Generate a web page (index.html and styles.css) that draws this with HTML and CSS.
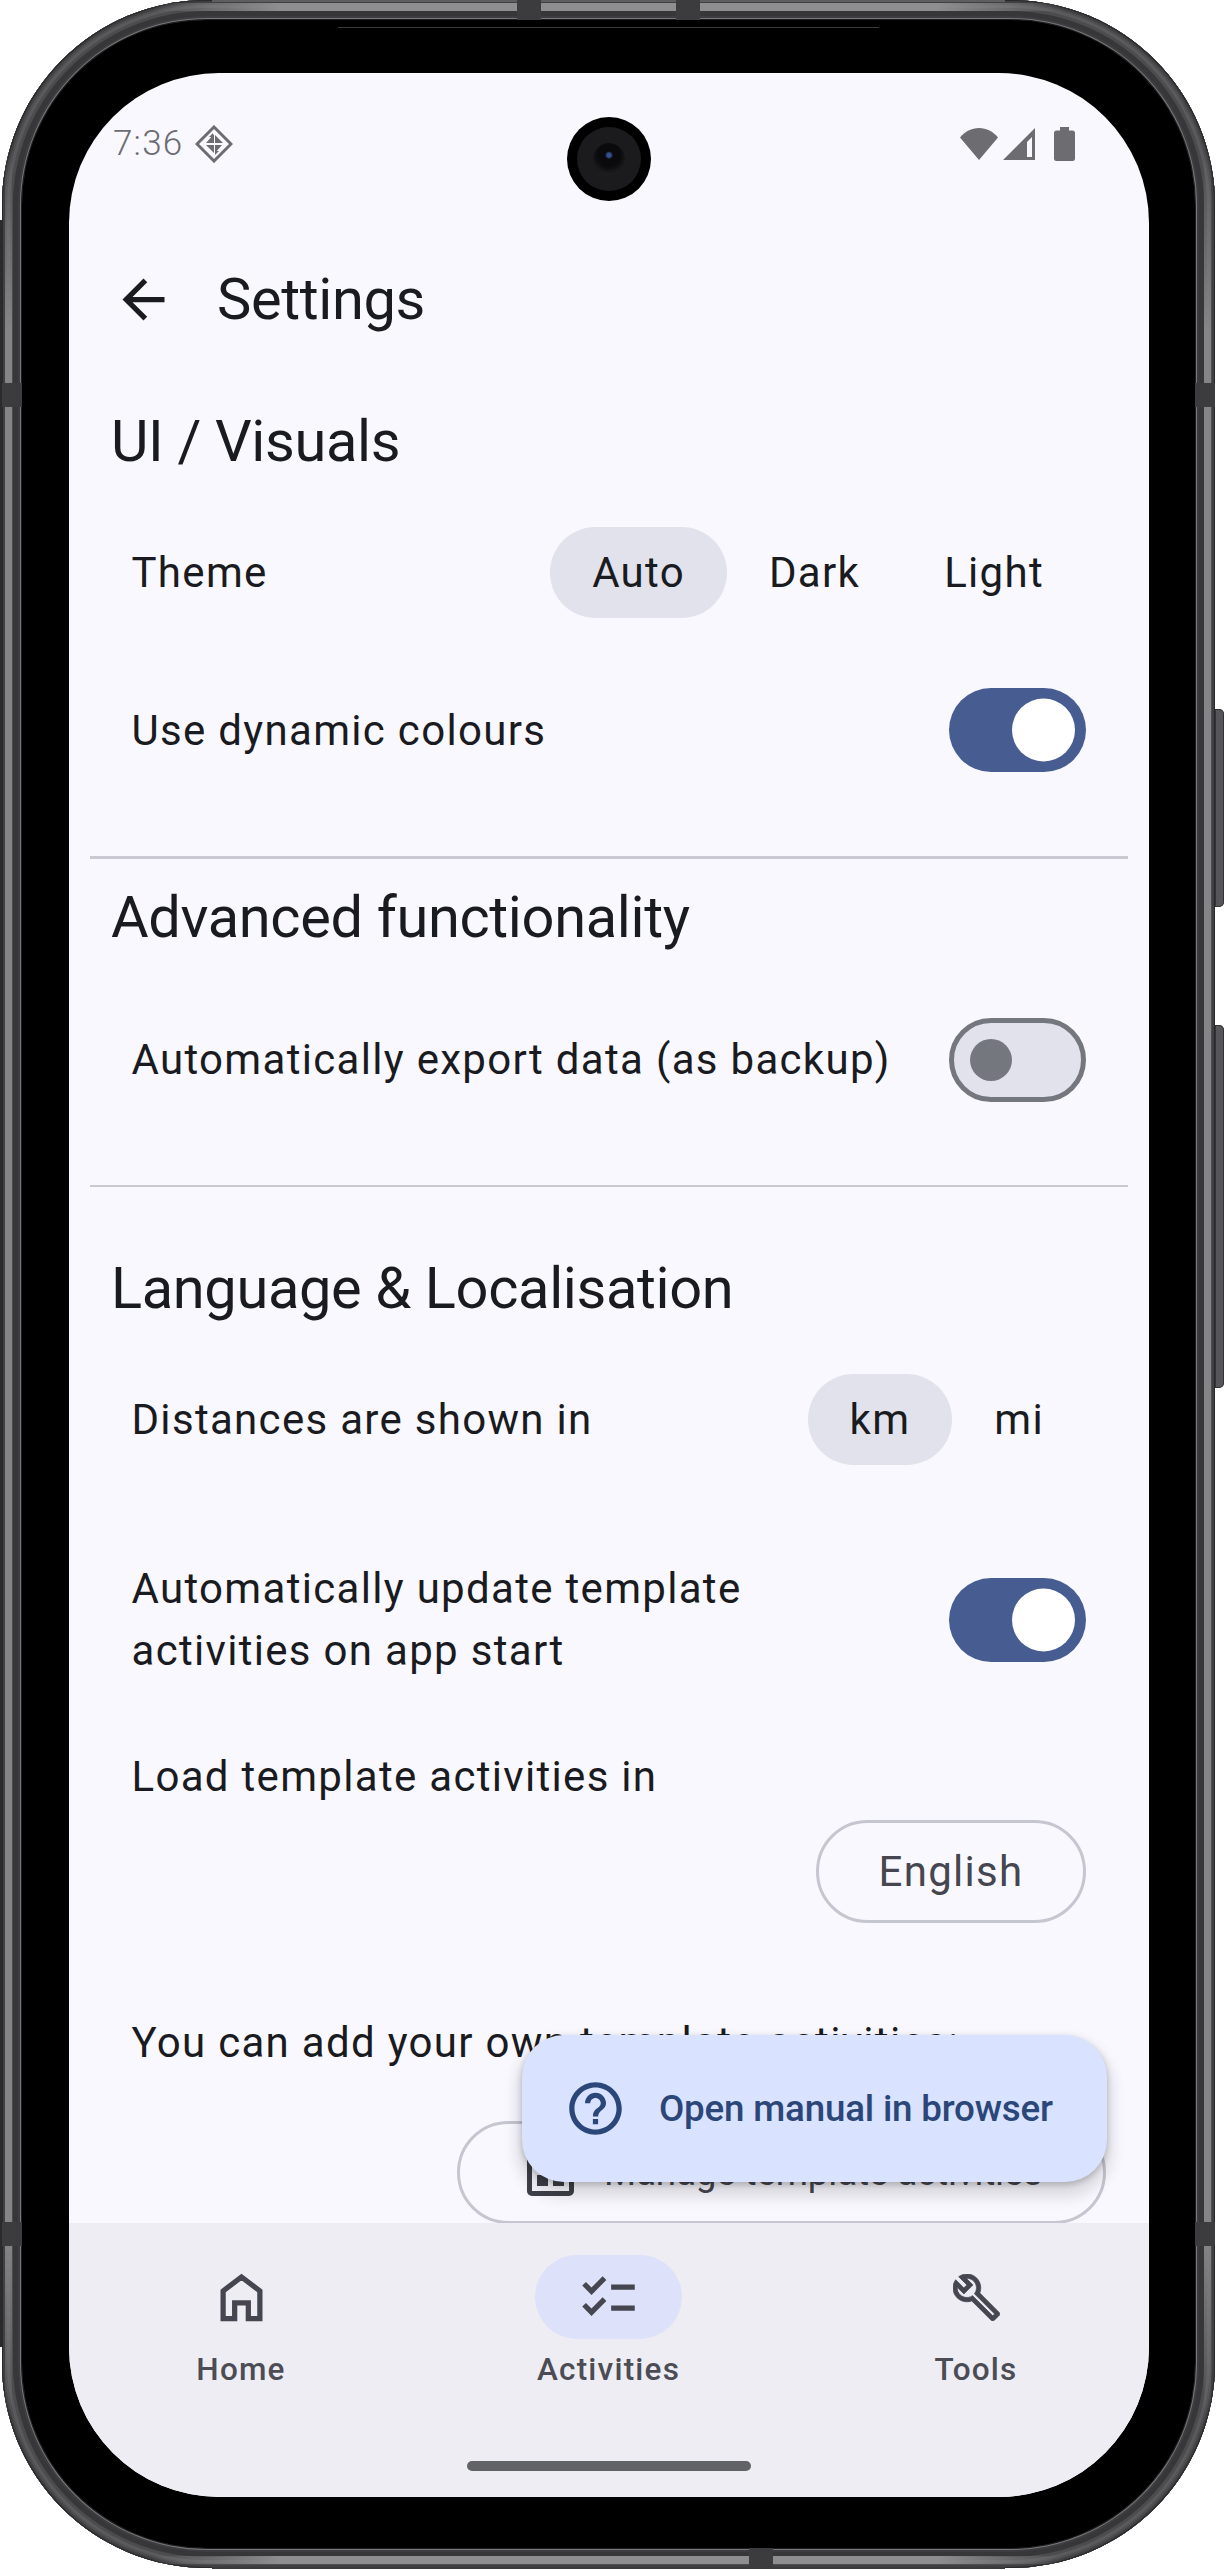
FILE: index.html
```html
<!DOCTYPE html>
<html lang="en">
<head>
<meta charset="utf-8">
<title>Settings</title>
<link rel="stylesheet" href="styles.css">
</head>
<body>
<div class="device">
  <span class="edge edge-left"></span>
  <span class="edge edge-top"></span>
  <span class="edge edge-bottom"></span>
  <span class="shine shine-top"></span>
  <span class="shine shine-bottom"></span>
  <span class="shine shine-left"></span>
  <span class="shine shine-right"></span>
  <span class="antenna antenna-top-a"></span>
  <span class="antenna antenna-top-b"></span>
  <span class="antenna antenna-bottom"></span>
  <span class="antenna antenna-left-a"></span>
  <span class="antenna antenna-left-b"></span>
  <span class="antenna antenna-right-a"></span>
  <span class="antenna antenna-right-b"></span>
  <span class="side-button side-button-power"></span>
  <span class="side-button side-button-volume"></span>
  <span class="notch-line"></span>
  <div class="bezel">
    <div class="screen">
      <div class="camera"><span class="camera-ring"></span><span class="camera-lens"></span></div>
      <main class="content">
        <div class="status-bar">
          <div class="status-left">
            <span class="clock">7:36</span>
            <svg class="status-diamond" viewBox="0 0 38 38"><path class="diamond-outline" d="M19 2 36 19 19 36 2 19Z"/><path class="diamond-fill" d="M19 9v9h-8ZM20 10l8 8h-8ZM11 20h8v8ZM27 20l-7 8v-8ZM14 12l4-4v4ZM24 26l-4 4v-4Z"/></svg>
          </div>
          <div class="status-right">
            <svg class="status-wifi" viewBox="0 0 38 32"><path d="M19 32 0 9.500C5 3.500 11.500 0 19 0s14 3.500 19 9.500Z"/></svg>
            <svg class="status-signal" viewBox="0 0 32 32"><path fill-rule="evenodd" d="M32 0V32H0ZM29 9 24 14V29H29Z"/></svg>
            <svg class="status-battery" viewBox="0 0 21 34"><path d="M6 0h9v3.500h3.500A2.500 2.500 0 0 1 21 6v25.500A2.500 2.500 0 0 1 18.500 34h-16A2.500 2.500 0 0 1 0 31.500V6a2.500 2.500 0 0 1 2.500-2.500H6Z"/></svg>
          </div>
        </div>
        <header class="toolbar">
          <svg class="toolbar-back" viewBox="0 0 24 24"><path d="M20 11H7.830l5.590-5.590L12 4l-8 8 8 8 1.410-1.410L7.830 13H20v-2z"/></svg>
          <h1 class="toolbar-title">Settings</h1>
        </header>

        <h2 class="section-title section-visuals">UI / Visuals</h2>
        <div class="row row-theme">
          <span class="label">Theme</span>
          <div class="segments">
            <span class="segment segment-on">Auto</span>
            <span class="segment">Dark</span>
            <span class="segment">Light</span>
          </div>
        </div>
        <div class="row row-dynamic">
          <span class="label">Use dynamic colours</span>
          <span class="switch switch-on"><span class="thumb"></span></span>
        </div>
        <hr class="divider divider-first">

        <h2 class="section-title section-advanced">Advanced functionality</h2>
        <div class="row row-export">
          <span class="label">Automatically export data (as backup)</span>
          <span class="switch switch-off"><span class="thumb"></span></span>
        </div>
        <hr class="divider divider-second">

        <h2 class="section-title section-language">Language &amp; Localisation</h2>
        <div class="row row-distance">
          <span class="label">Distances are shown in</span>
          <div class="segments">
            <span class="segment segment-on">km</span>
            <span class="segment">mi</span>
          </div>
        </div>
        <div class="row row-update">
          <span class="label label-wrap">Automatically update template activities on app start</span>
          <span class="switch switch-on"><span class="thumb"></span></span>
        </div>
        <div class="row row-load"><span class="label">Load template activities in</span></div>
        <div class="row row-english"><span class="outline-button english-button">English</span></div>
        <div class="row row-own"><span class="label">You can add your own template activities:</span></div>
        <div class="row row-manage">
          <span class="outline-button manage-button">
            <svg class="manage-icon" viewBox="0 0 47 47"><path fill-rule="evenodd" d="M5 0h37a5 5 0 0 1 5 5v37a5 5 0 0 1-5 5H5a5 5 0 0 1-5-5V5a5 5 0 0 1 5-5ZM5 5v37h37V5Z"/><path d="M10 26h11v11H10ZM26 26h11v11H26ZM10 10h27v11H10Z"/></svg>
            <span class="manage-text">Manage template activities</span>
          </span>
        </div>
      </main>

      <nav class="nav">
        <div class="nav-items">
          <div class="nav-item">
            <span class="nav-pill">
              <svg class="nav-icon nav-home" viewBox="0 0 24 24"><path d="M5 20V9.500L12 4.200l7 5.300V20h-4.400v-6H9.400v6Z"/></svg>
            </span>
            <span class="nav-label">Home</span>
          </div>
          <div class="nav-item nav-item-on">
            <span class="nav-pill">
              <svg class="nav-icon" viewBox="0 0 24 24"><path d="M22 7h-9v2h9V7zm0 8h-9v2h9v-2zM5.540 11 2 7.460l1.410-1.410 2.120 2.120 4.240-4.240 1.410 1.410L5.540 11zm0 8L2 15.460l1.410-1.410 2.120 2.120 4.240-4.240 1.410 1.410L5.540 19z"/></svg>
            </span>
            <span class="nav-label">Activities</span>
          </div>
          <div class="nav-item">
            <span class="nav-pill">
              <svg class="nav-tools" viewBox="1 1 22 22"><path d="M22.610 18.990l-9.080-9.080c.93-2.340.45-5.100-1.440-7C9.790.61 6.210.4 3.660 2.260L7.500 6.110 6.080 7.520 2.250 3.690C.39 6.230.6 9.820 2.900 12.110c1.860 1.860 4.570 2.350 6.890 1.480l9.110 9.110c.39.39 1.020.39 1.410 0l2.300-2.300c.4-.38.4-1.010 0-1.410zm-3 1.600l-9.460-9.460c-.61.45-1.290.72-2 .82-1.360.2-2.790-.21-3.830-1.250C3.370 9.760 2.930 8.500 3 7.260l3.090 3.090 4.240-4.240-3.090-3.090c1.240-.07 2.490.37 3.440 1.310 1.080 1.080 1.490 2.570 1.240 3.960-.12.71-.42 1.370-.88 1.960l9.450 9.450-.88.88z"/></svg>
            </span>
            <span class="nav-label">Tools</span>
          </div>
        </div>
        <span class="gesture-bar"></span>
      </nav>

      <button class="fab" type="button">
        <svg class="fab-icon" viewBox="0 0 24 24"><path d="M11 18h2v-2h-2v2zm1-16C6.480 2 2 6.480 2 12s4.480 10 10 10 10-4.480 10-10S17.520 2 12 2zm0 18c-4.410 0-8-3.590-8-8s3.590-8 8-8 8 3.590 8 8-3.590 8-8 8zm0-14c-2.210 0-4 1.790-4 4h2c0-1.100.9-2 2-2s2 .9 2 2c0 2-3 1.750-3 5h2c0-2.250 3-2.500 3-5 0-2.210-1.790-4-4-4z"/></svg>
        <span class="fab-label">Open manual in browser</span>
      </button>
    </div>
  </div>
</div>
</body>
</html>
```

FILE: styles.css
```css
* { box-sizing: border-box; }

html, body {
  margin: 0;
  padding: 0;
  background: #fff;
}

body {
  width: 1224px;
  height: 2570px;
  overflow: hidden;
  font-family: Roboto, "Liberation Sans", sans-serif;
  color: #1a1b20;
}

/* ---------- device frame ---------- */
.device {
  position: relative;
  width: 1213px;
  height: 2568px;
  margin-left: 2px;
  padding: 20px;
  border-radius: 205px;
  background: #3f3f41;
  box-shadow:
    inset 0 0 0 1px #29292b,
    inset 0 0 0 3px #404042,
    inset 0 0 0 5px #4e4e50,
    inset 0 0 0 8px #5a5a5c,
    inset 0 0 0 11px #4c4c4e,
    inset 0 0 0 16px #373739,
    inset 0 0 0 18px #3e3e40,
    inset 0 0 0 19px #77777a,
    inset 0 0 0 20px #1e1e20;
}

.edge {
  position: absolute;
  background: #2b2b2d;
}
.edge-left { left: -2px; top: 220px; width: 2px; height: 2127px; }
.edge-top { left: 210px; top: 0; width: 793px; height: 2px; background: #5e5e60; }
.edge-bottom { left: 210px; bottom: -1px; width: 793px; height: 2px; background: #3a3a3c; }

.shine { position: absolute; }
.shine-top,
.shine-bottom {
  left: 150px;
  width: 913px;
  height: 8px;
  background: linear-gradient(90deg, transparent, #8e8e91 14%, #8e8e91 86%, transparent);
}
.shine-top { top: 3px; }
.shine-bottom { bottom: 4px; }
.shine-left,
.shine-right {
  top: 150px;
  width: 7px;
  height: 2268px;
  background: linear-gradient(180deg, transparent, #858588 8%, #858588 92%, transparent);
}
.shine-left { left: 3px; }
.shine-right { right: 4px; }

.antenna {
  position: absolute;
  background: #3c3c3e;
}
.antenna-top-a { left: 515px; top: 0; width: 24px; height: 20px; }
.antenna-top-b { left: 674px; top: 0; width: 24px; height: 20px; }
.antenna-bottom { left: 747px; bottom: 0; width: 24px; height: 20px; }
.antenna-left-a { left: 0; top: 383px; width: 20px; height: 24px; }
.antenna-left-b { left: 0; top: 2222px; width: 20px; height: 24px; }
.antenna-right-a { right: 0; top: 383px; width: 20px; height: 24px; }
.antenna-right-b { right: 0; top: 2222px; width: 20px; height: 24px; }

.side-button {
  position: absolute;
  left: 1213px;
  width: 9px;
  border-radius: 0 5px 5px 0;
  background: #55555a;
  box-shadow: inset 0 0 0 1px #333;
}
.side-button-power { top: 709px; height: 198px; }
.side-button-volume { top: 1025px; height: 363px; }

.notch-line {
  position: absolute;
  z-index: 1;
  left: 336px;
  top: 27px;
  width: 541px;
  height: 1px;
  background: #3a3a3c;
}

.bezel {
  width: 100%;
  height: 100%;
  padding: 53px 44px 51px 47px;
  border-radius: 185px;
  background: #000;
}

.screen {
  position: relative;
  display: flex;
  flex-direction: column;
  width: 1080px;
  height: 2424px;
  overflow: hidden;
  border-radius: 150px;
  background: #f9f8ff;
}

.camera {
  position: absolute;
  left: 498px;
  top: 44px;
  width: 84px;
  height: 84px;
  border-radius: 50%;
  background: #000;
}
.camera-ring {
  position: absolute;
  inset: 10px;
  border-radius: 50%;
  background: #1b1b1e;
}
.camera-lens {
  position: absolute;
  inset: 26px;
  border-radius: 50%;
  background: radial-gradient(circle at 50% 38%, #34508f 0 2px, #0a0a0c 4px 11px, #2c2c2f 100%);
}

/* ---------- status bar + toolbar ---------- */
.content {
  flex: 1;
  min-height: 0;
  overflow: hidden;
}

.status-bar {
  display: flex;
  align-items: center;
  justify-content: space-between;
  height: 142px;
  padding: 0 74px 0 44px;
  color: #6c6c71;
}
.status-left,
.status-right { display: flex; align-items: center; }
.status-left { gap: 12px; }
.clock {
  font-size: 35px;
  font-weight: 300;
  letter-spacing: 1.200px;
  line-height: 40px;
}
.status-diamond { width: 38px; height: 38px; }
.diamond-outline { fill: none; stroke: #6c6c71; stroke-width: 3; }
.diamond-fill { fill: #6c6c71; }
.status-right svg { fill: #6c6c71; display: block; }
.status-wifi { width: 38px; height: 32px; margin-right: 5px; }
.status-signal { width: 32px; height: 32px; margin-right: 19px; }
.status-battery { width: 21px; height: 34px; }

.toolbar {
  display: flex;
  align-items: center;
  height: 168px;
  padding-left: 43px;
}
.toolbar-back {
  width: 63px;
  height: 63px;
  margin-right: 42px;
  fill: #1a1b20;
}
.toolbar-title {
  margin: 0;
  font-size: 57.750px;
  font-weight: 400;
  line-height: 76px;
  letter-spacing: -.350px;
}

/* ---------- settings ---------- */
.section-title {
  margin: 0;
  padding-left: 42px;
  font-size: 57.750px;
  font-weight: 400;
  line-height: 76px;
  letter-spacing: -.350px;
}
.section-visuals { margin-top: 20px; }
.section-advanced { margin-top: 20px; }
.section-language { margin-top: 63px; }

.divider {
  height: 2.600px;
  margin: 0 21px;
  border: 0;
  background: #cac9d2;
}
.divider-first { margin-top: 84px; }
.divider-second { margin-top: 83px; }

.row {
  display: flex;
  align-items: center;
  justify-content: space-between;
  padding: 0 63px 0 62.500px;
}
.row-theme { margin-top: 48px; }
.row-dynamic { margin-top: 70px; }
.row-dynamic .label { padding-top: 2px; }
.row-export { margin-top: 63px; }
.row-distance { margin-top: 48px; }
.row-update { margin-top: 93px; }
.row-load { margin-top: 64px; }
.row-english { margin-top: 12px; justify-content: flex-end; }
.row-own { margin-top: 89px; }
.row-manage { margin-top: 47px; justify-content: flex-end; padding-right: 43px; }

.label {
  font-size: 42px;
  line-height: 62px;
  letter-spacing: 1.310px;
}
.label-wrap { width: 700px; }

.segments { display: flex; align-items: center; }
.segment {
  display: flex;
  align-items: center;
  justify-content: center;
  height: 91px;
  padding: 0 42px;
  border-radius: 46px;
  font-size: 42px;
  letter-spacing: 1.310px;
}
.segment-on { background: #e1e2ec; }

.switch {
  position: relative;
  display: block;
  flex: none;
  width: 137px;
  height: 84px;
  border-radius: 42px;
}
.switch-on { background: #475d92; }
.switch-off { background: #e1e2ec; border: 5.250px solid #75777f; }
.thumb {
  position: absolute;
  top: 50%;
  border-radius: 50%;
  transform: translateY(-50%);
}
.switch-on .thumb { right: 11px; width: 63px; height: 63px; background: #fff; }
.switch-off .thumb { left: 16px; width: 42px; height: 42px; background: #75777f; }

.outline-button {
  display: flex;
  align-items: center;
  justify-content: center;
  height: 103px;
  border: 3px solid #c5c6d0;
  border-radius: 52px;
  color: #45464f;
}
.english-button {
  width: 270px;
  font-size: 42px;
  letter-spacing: 1.310px;
}
.manage-button {
  gap: 30px;
  width: 649px;
  padding-left: 6px;
  font-size: 36.750px;
  letter-spacing: -.150px;
}
.manage-icon { width: 47px; height: 47px; fill: #3f4048; flex: none; }

/* ---------- bottom navigation ---------- */
.nav {
  display: flex;
  flex-direction: column;
  flex: none;
  height: 274px;
  padding-top: 32px;
  background: #eeedf4;
}
.nav-items {
  display: grid;
  grid-template-columns: repeat(3, 240px);
  column-gap: 127.500px;
  padding-left: 52px;
}
.nav-item {
  display: flex;
  flex-direction: column;
  align-items: center;
}
.nav-pill {
  display: flex;
  align-items: center;
  justify-content: center;
  width: 147px;
  height: 84px;
  border-radius: 42px;
}
.nav-item-on .nav-pill { background: #dde1f9; }
.nav-icon { width: 63px; height: 63px; fill: #45464f; }
.nav-home { fill: none; stroke: #45464f; stroke-width: 2; }
.nav-tools { width: 47px; height: 47px; fill: #45464f; stroke: #45464f; stroke-width: .35; }
.nav-label {
  margin-top: 10px;
  font-size: 31.500px;
  font-weight: 500;
  line-height: 42px;
  letter-spacing: 1.200px;
  color: #4b4c54;
}
.gesture-bar {
  align-self: center;
  width: 284px;
  height: 10px;
  margin-top: 70px;
  border-radius: 5px;
  background: #626367;
}

/* ---------- floating button ---------- */
.fab {
  position: absolute;
  right: 42px;
  bottom: 315px;
  display: flex;
  align-items: center;
  gap: 32px;
  width: 585px;
  height: 147px;
  padding: 0 0 0 42px;
  border: 0;
  border-radius: 42px;
  background: #d9e2ff;
  color: #2b4678;
  font-family: inherit;
  box-shadow: 0 10px 14px 6px rgba(0, 0, 0, .11), 0 3px 6px rgba(0, 0, 0, .22);
}
.fab-icon { width: 63px; height: 63px; fill: #2b4678; flex: none; }
.fab-label {
  font-size: 36.750px;
  font-weight: 500;
  letter-spacing: -.200px;
}
```
